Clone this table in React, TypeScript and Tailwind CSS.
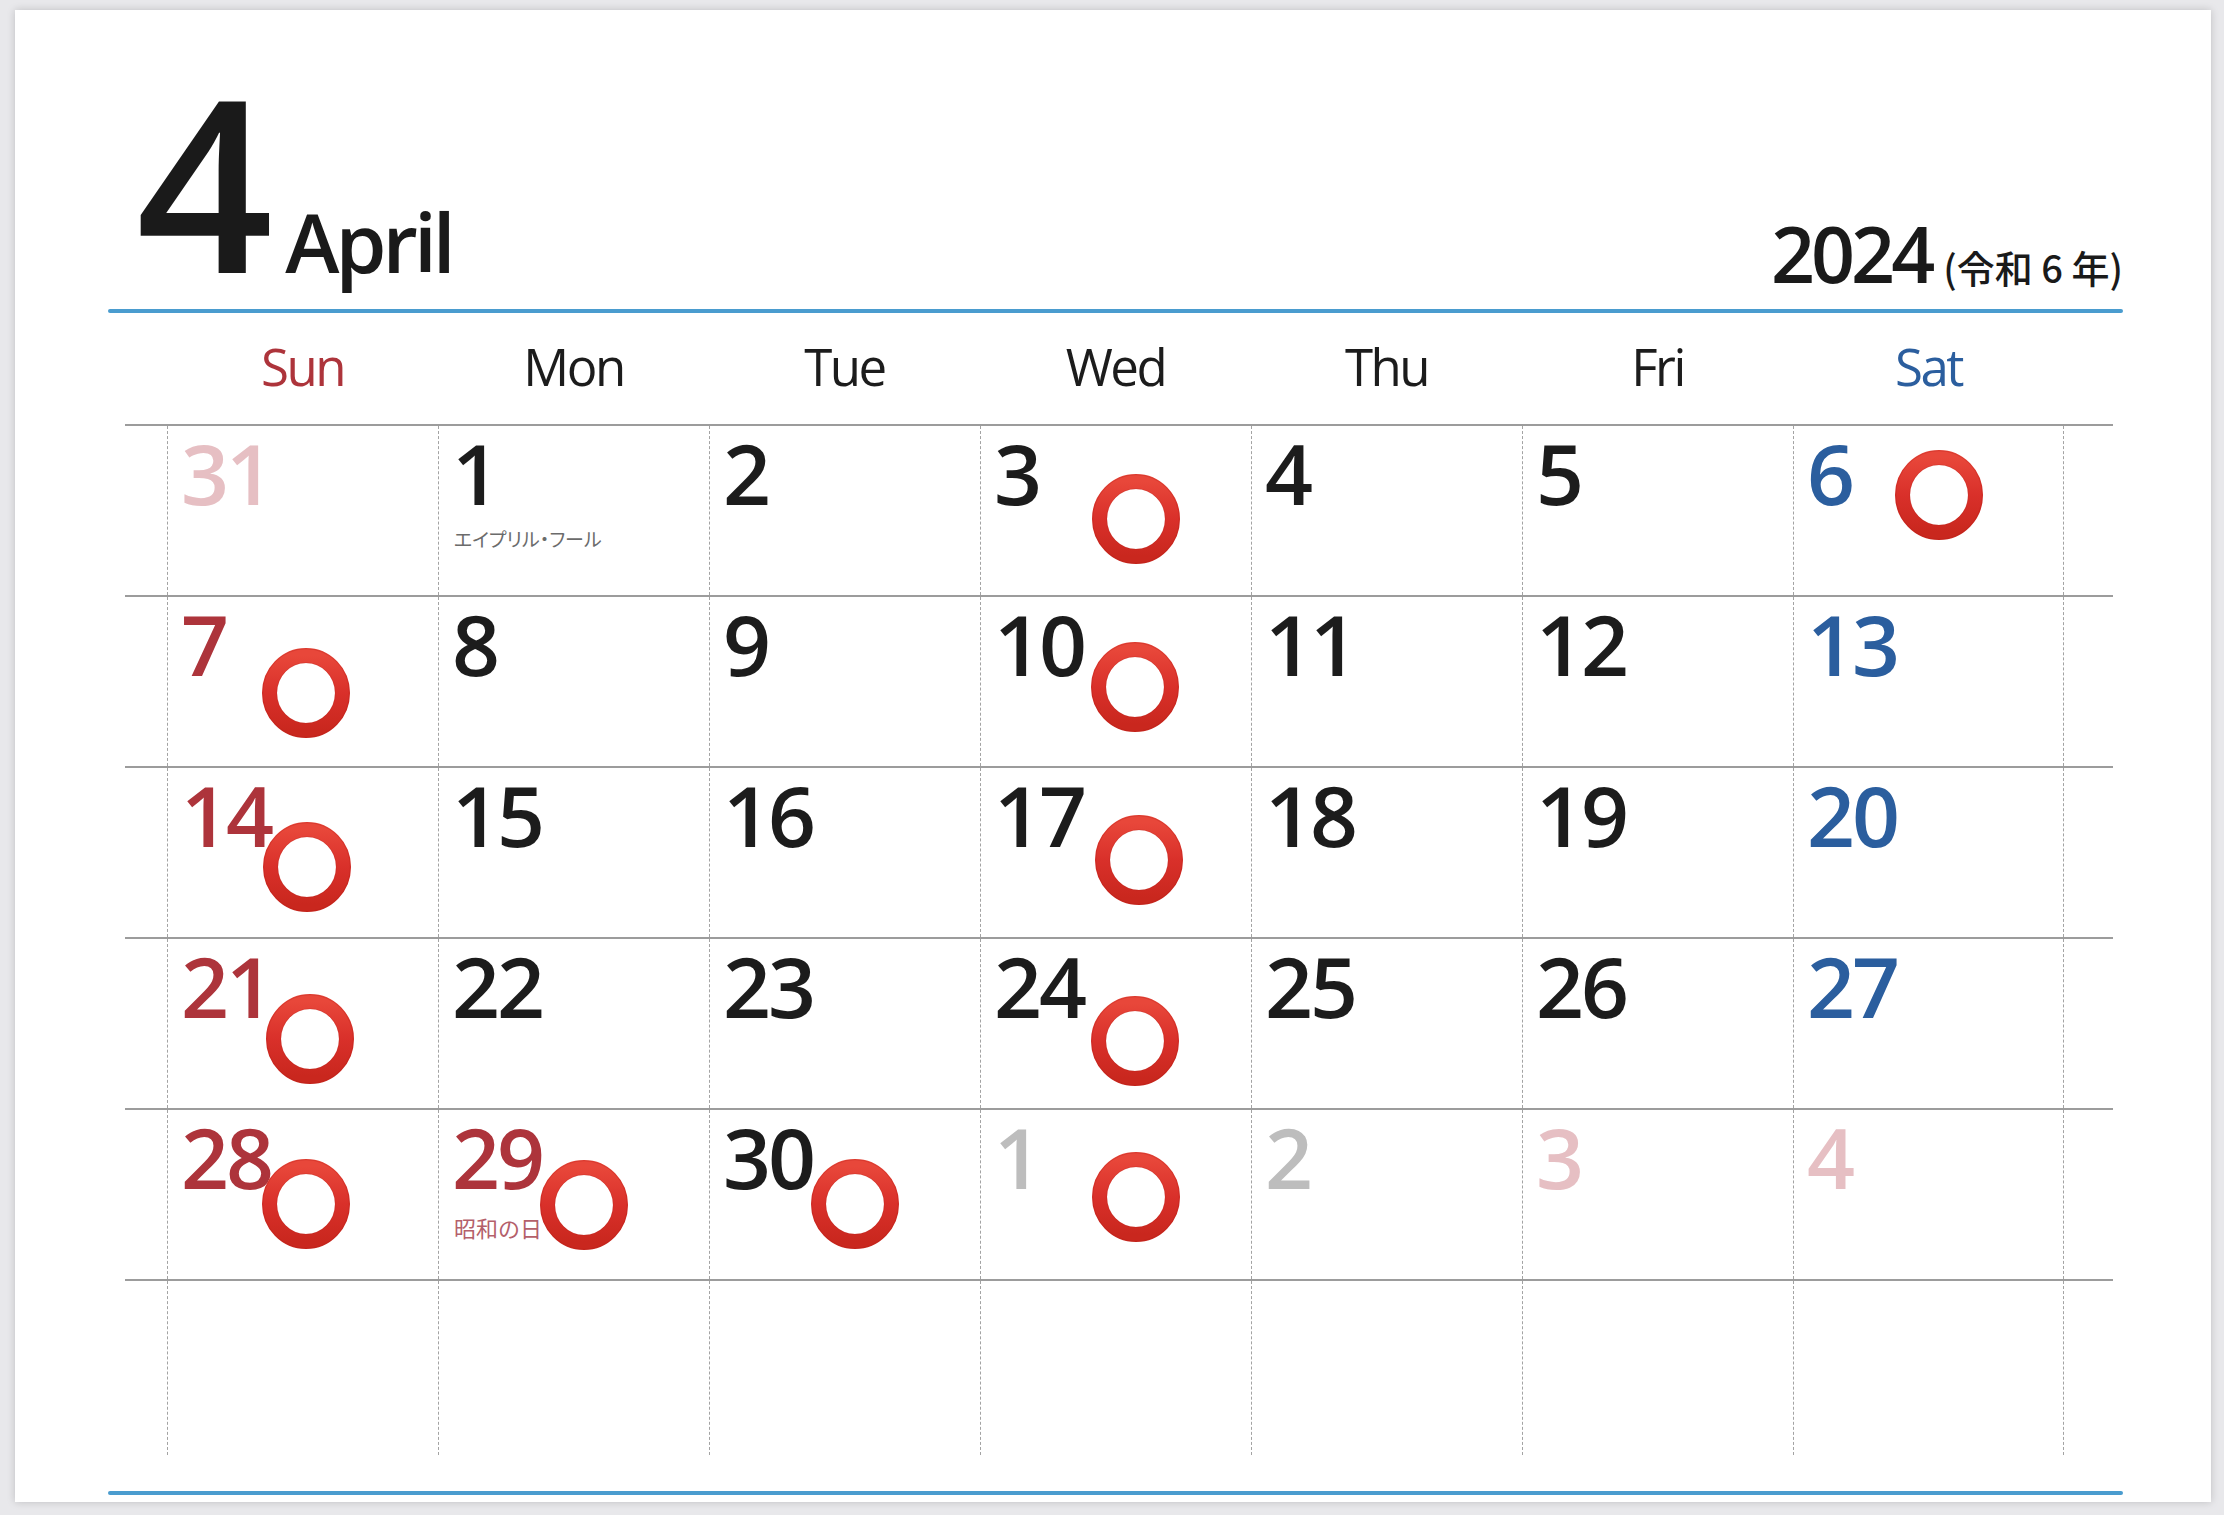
type Tone = "black" | "sun" | "sat" | "gray" | "pink";

type Day = {
  n: number;
  tone: Tone;
  note?: string;
  holiday?: boolean;
  ring?: [number, number];
};

const toneClass: Record<Tone, string> = {
  black: "text-[#1c1c1c]",
  sun: "text-[#ad343b]",
  sat: "text-[#2b5e9e]",
  gray: "text-[#bdbdbd]",
  pink: "text-[#e6bfc3]",
};

const dayNames: { label: string; tone: Tone }[] = [
  { label: "Sun", tone: "sun" },
  { label: "Mon", tone: "black" },
  { label: "Tue", tone: "black" },
  { label: "Wed", tone: "black" },
  { label: "Thu", tone: "black" },
  { label: "Fri", tone: "black" },
  { label: "Sat", tone: "sat" },
];

// ring = centre of the red circle, measured from the cell's top-left corner
const weeks: Day[][] = [
  [
    { n: 31, tone: "pink" },
    { n: 1, tone: "black", note: "エイプリル・フール" },
    { n: 2, tone: "black" },
    { n: 3, tone: "black", ring: [155, 95] },
    { n: 4, tone: "black" },
    { n: 5, tone: "black" },
    { n: 6, tone: "sat", ring: [145, 71] },
  ],
  [
    { n: 7, tone: "sun", ring: [138, 98] },
    { n: 8, tone: "black" },
    { n: 9, tone: "black" },
    { n: 10, tone: "black", ring: [154, 92] },
    { n: 11, tone: "black" },
    { n: 12, tone: "black" },
    { n: 13, tone: "sat" },
  ],
  [
    { n: 14, tone: "sun", ring: [139, 101] },
    { n: 15, tone: "black" },
    { n: 16, tone: "black" },
    { n: 17, tone: "black", ring: [158, 94] },
    { n: 18, tone: "black" },
    { n: 19, tone: "black" },
    { n: 20, tone: "sat" },
  ],
  [
    { n: 21, tone: "sun", ring: [142, 102] },
    { n: 22, tone: "black" },
    { n: 23, tone: "black" },
    { n: 24, tone: "black", ring: [154, 104] },
    { n: 25, tone: "black" },
    { n: 26, tone: "black" },
    { n: 27, tone: "sat" },
  ],
  [
    { n: 28, tone: "sun", ring: [138, 96] },
    { n: 29, tone: "sun", note: "昭和の日", holiday: true, ring: [145, 97] },
    { n: 30, tone: "black", ring: [145, 96] },
    { n: 1, tone: "gray", ring: [155, 89] },
    { n: 2, tone: "gray" },
    { n: 3, tone: "pink" },
    { n: 4, tone: "pink" },
  ],
];

function Ring({ x, y }: { x: number; y: number }) {
  return (
    <svg
      width="88"
      height="90"
      viewBox="0 0 88 90"
      className="absolute z-10"
      style={{ left: x - 44, top: y - 47 }}
    >
      <ellipse cx="44" cy="45" rx="36.5" ry="37.5" fill="none" stroke="url(#ringFill)" strokeWidth="15" />
      <ellipse cx="44" cy="45" rx="43.3" ry="44.3" fill="none" stroke="#b31f18" strokeOpacity="0.3" strokeWidth="1" />
      <ellipse cx="44" cy="45" rx="29.3" ry="30.3" fill="none" stroke="#b31f18" strokeOpacity="0.25" strokeWidth="1" />
    </svg>
  );
}

function Cell({ day }: { day?: Day }) {
  return (
    <div className="relative h-full w-[271px] border-l border-dashed border-[#a3a3a3] pl-[13px] pt-[5px] last:border-r">
      {day && (
        <>
          <div className={`text-[84px] leading-none font-[560] tracking-[-3px] ${toneClass[day.tone]}`}>{day.n}</div>
          {day.note &&
            (day.holiday ? (
              <div className="mt-[17px] pl-[2px] font-['Noto_Sans_CJK_JP',sans-serif] text-[22px] leading-none text-[#b4606a]">
                {day.note}
              </div>
            ) : (
              <div className="mt-[14px] pl-[2px] font-['Noto_Sans_CJK_JP',sans-serif] text-[19px] leading-none text-[#6b6b6b] [font-feature-settings:'palt']">
                {day.note}
              </div>
            ))}
          {day.ring && <Ring x={day.ring[0]} y={day.ring[1]} />}
        </>
      )}
    </div>
  );
}

export default function App() {
  return (
    <div className="h-[1515px] w-[2224px] overflow-hidden bg-[#e8e8eb] pl-[15px] pt-[10px] font-['Open_Sans',sans-serif]">
      <svg width="0" height="0" className="absolute">
        <defs>
          <linearGradient id="ringFill" x1="0" y1="0" x2="0" y2="1">
            <stop offset="0" stopColor="#e8473a" />
            <stop offset="0.5" stopColor="#d9302a" />
            <stop offset="1" stopColor="#c9271e" />
          </linearGradient>
        </defs>
      </svg>

      <div className="flex h-[1492px] w-[2196px] flex-col bg-white pl-[93px] pr-[88px] shadow-[0_0_8px_rgba(0,0,0,0.18)]">
        <header className="flex h-[299px] items-end justify-between">
          <div className="mb-[9px] flex items-baseline pl-[28px] text-[#1a1a1a]">
            <span className="text-[240px] leading-none font-semibold">4</span>
            <span className="ml-[12px] text-[82px] leading-none font-semibold tracking-[-4px]">April</span>
          </div>
          <div className="mb-[17px] flex items-baseline text-[#1a1a1a]">
            <span className="text-[77px] leading-none font-[560] tracking-[-4px]">2024</span>
            <span className="ml-[12px] font-['Noto_Sans_CJK_JP',sans-serif] text-[38px] leading-none font-medium">
              (令和 6 年)
            </span>
          </div>
        </header>

        <div className="h-[4px] w-full rounded-full bg-[#4a9ccf]" />

        <div className="ml-[17px] mr-[10px]">
          <div className="flex h-[111px] pl-[42px] pt-[28px]">
            {dayNames.map((d) => (
              <div
                key={d.label}
                className={`w-[271px] text-center text-[51px] leading-none font-medium tracking-[-2.5px] ${toneClass[d.tone]}`}
              >
                {d.label}
              </div>
            ))}
          </div>

          {weeks.map((week, i) => (
            <div key={i} className="flex h-[171px] border-t-2 border-[#9c9c9c] pl-[42px]">
              {week.map((day, j) => (
                <Cell key={j} day={day} />
              ))}
            </div>
          ))}
          <div className="flex h-[176px] border-t-2 border-[#9c9c9c] pl-[42px]">
            {Array.from({ length: 7 }).map((_, j) => (
              <Cell key={j} />
            ))}
          </div>
        </div>

        <div className="mt-[36px] h-[4px] w-full rounded-full bg-[#4a9ccf]" />
      </div>
    </div>
  );
}
